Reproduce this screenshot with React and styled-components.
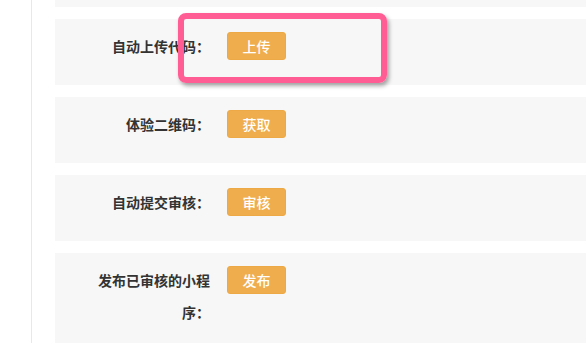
import React from "react";
import styled, { createGlobalStyle } from "styled-components";

const GlobalStyle = createGlobalStyle`
  html, body {
    margin: 0;
    padding: 0;
    background: #fff;
    overflow: hidden;
  }
  body {
    font-family: "Noto Sans CJK SC", "Noto Sans", sans-serif;
  }
`;

const Page = styled.div`
  display: flex;
  width: 586px;
  height: 343px;
  overflow: hidden;
  position: relative;
`;

const Rail = styled.div`
  width: 31px;
  flex: none;
  border-right: 1px solid #e8e8e8;
`;

const Main = styled.div`
  flex: 1;
  display: flex;
  flex-direction: column;
  gap: 12px;
  padding-left: 23px;
`;

const Stub = styled.div`
  height: 7px;
  background: #f7f7f7;
  flex: none;
`;

const Card = styled.div`
  display: flex;
  align-items: flex-start;
  min-height: ${(p) => (p.$tall ? "110px" : "66px")};
  box-sizing: border-box;
  padding: 11px 0 0 35px;
  background: #f7f7f7;
  flex: none;
`;

const Label = styled.div`
  width: 120px;
  flex: none;
  text-align: right;
  font-size: 14px;
  line-height: 32px;
  font-weight: 700;
  color: #333;
`;

const Button = styled.button`
  margin: 2px 0 0 17px;
  width: 59px;
  height: 28px;
  flex: none;
  border: 1px solid #eea947;
  border-radius: 3px;
  background: #f0ad4e;
  color: #fff;
  font-family: inherit;
  font-size: 14px;
  font-weight: 500;
  padding: 0;
  cursor: pointer;
`;

const Highlight = styled.div`
  position: absolute;
  left: 178px;
  top: 13px;
  width: 209px;
  height: 70px;
  box-sizing: border-box;
  border: 6px solid #ff5d93;
  border-radius: 8px;
  box-shadow: 2px 3px 4px rgba(0, 0, 0, 0.35);
  pointer-events: none;
`;

const rows = [
  { label: "自动上传代码：", action: "上传" },
  { label: "体验二维码：", action: "获取" },
  { label: "自动提交审核：", action: "审核" },
  { label: "发布已审核的小程序：", action: "发布", tall: true },
];

export default function App() {
  return (
    <>
      <GlobalStyle />
      <Page>
        <Rail />
        <Main>
          <Stub />
          {rows.map((r) => (
            <Card key={r.action} $tall={r.tall}>
              <Label>{r.label}</Label>
              <Button>{r.action}</Button>
            </Card>
          ))}
        </Main>
        <Highlight />
      </Page>
    </>
  );
}
